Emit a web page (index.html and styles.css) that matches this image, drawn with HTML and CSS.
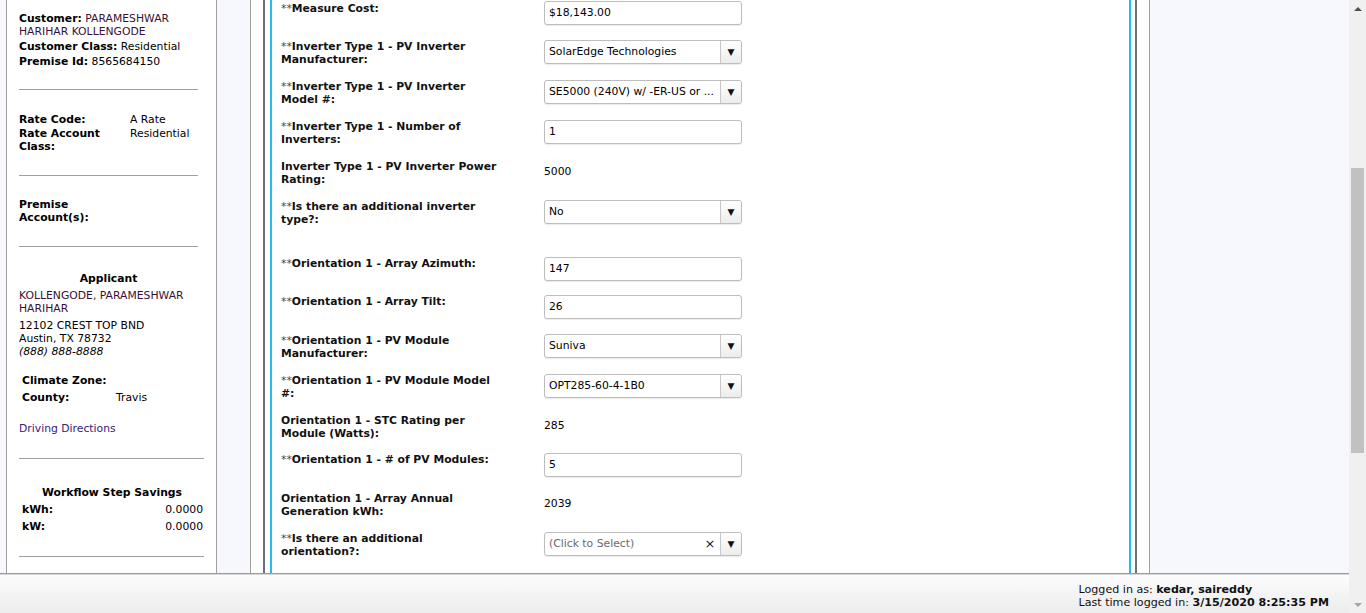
FILE: index.html
```html
<!DOCTYPE html>
<html>
<head>
<meta charset="utf-8">
<title>Measure</title>
<link rel="stylesheet" href="styles.css">
</head>
<body>
<div class="window">
  <div class="main">
    <div class="content">
      <aside class="side">
        <div class="f first"><b>Customer:</b> <span class="name">PARAMESHWAR HARIHAR KOLLENGODE</span></div>
        <div class="f"><b>Customer Class:</b> Residential</div>
        <div class="f"><b>Premise Id:</b> 8565684150</div>
        <hr class="rule r1">
        <div class="kv">
          <b>Rate Code:</b><span>A Rate</span>
          <b>Rate Account Class:</b><span>Residential</span>
        </div>
        <hr class="rule r2">
        <div class="premise"><b>Premise<br>Account(s):</b></div>
        <hr class="rule r3">
        <div class="applicant">Applicant</div>
        <div class="name app-name">KOLLENGODE, PARAMESHWAR HARIHAR</div>
        <div class="addr">12102 CREST TOP BND<br>Austin, TX 78732<br><i>(888) 888-8888</i></div>
        <div class="kv2">
          <b>Climate Zone:</b><span></span>
          <b>County:</b><span>Travis</span>
        </div>
        <a class="dir" href="#">Driving Directions</a>
        <hr class="rule wide r4">
        <div class="savings">Workflow Step Savings</div>
        <div class="sv"><b>kWh:</b><span>0.0000</span></div>
        <div class="sv"><b>kW:</b><span>0.0000</span></div>
        <hr class="rule wide r5">
      </aside>
      <section class="center">
        <div class="frame">
          <div class="accent">
            <div class="form">
              <div class="row h39"><div class="lbl"><span class="st">**</span>Measure Cost:</div><div class="input">$18,143.00</div></div>
              <div class="row"><div class="lbl"><span class="st">**</span>Inverter Type 1 - PV Inverter Manufacturer:</div><div class="select"><span class="sv-text">SolarEdge Technologies</span><span class="arrow">&#9660;</span></div></div>
              <div class="row"><div class="lbl"><span class="st">**</span>Inverter Type 1 - PV Inverter Model #:</div><div class="select"><span class="sv-text">SE5000 (240V) w/ -ER-US or ...</span><span class="arrow">&#9660;</span></div></div>
              <div class="row"><div class="lbl"><span class="st">**</span>Inverter Type 1 - Number of Inverters:</div><div class="input">1</div></div>
              <div class="row"><div class="lbl">Inverter Type 1 - PV Inverter Power Rating:</div><div class="val">5000</div></div>
              <div class="row h57"><div class="lbl"><span class="st">**</span>Is there an additional inverter type?:</div><div class="select"><span class="sv-text">No</span><span class="arrow">&#9660;</span></div></div>
              <div class="row h38"><div class="lbl"><span class="st">**</span>Orientation 1 - Array Azimuth:</div><div class="input">147</div></div>
              <div class="row h39"><div class="lbl"><span class="st">**</span>Orientation 1 - Array Tilt:</div><div class="input">26</div></div>
              <div class="row"><div class="lbl"><span class="st">**</span>Orientation 1 - PV Module Manufacturer:</div><div class="select"><span class="sv-text">Suniva</span><span class="arrow">&#9660;</span></div></div>
              <div class="row"><div class="lbl"><span class="st">**</span>Orientation 1 - PV Module Model #:</div><div class="select"><span class="sv-text">OPT285-60-4-1B0</span><span class="arrow">&#9660;</span></div></div>
              <div class="row h39"><div class="lbl">Orientation 1 - STC Rating per Module (Watts):</div><div class="val">285</div></div>
              <div class="row h39"><div class="lbl"><span class="st">**</span>Orientation 1 - # of PV Modules:</div><div class="input">5</div></div>
              <div class="row"><div class="lbl">Orientation 1 - Array Annual Generation kWh:</div><div class="val">2039</div></div>
              <div class="row"><div class="lbl"><span class="st">**</span>Is there an additional orientation?:</div><div class="select"><span class="sv-text ph">(Click to Select)</span><span class="clear">&#215;</span><span class="arrow">&#9660;</span></div></div>
            </div>
          </div>
        </div>
      </section>
    </div>
    <footer class="footer">
      <div class="login">
        <div>Logged in as: <b>kedar, saireddy</b></div>
        <div>Last time logged in: <b>3/15/2020 8:25:35 PM</b></div>
      </div>
    </footer>
  </div>
  <div class="scrollbar">
    <div class="sb-btn"><span class="tri-up"></span></div>
    <div class="sb-track"><div class="sb-thumb"></div></div>
    <div class="sb-btn"><span class="tri-down"></span></div>
  </div>
</div>
</body>
</html>
```

FILE: styles.css
```css
* { box-sizing: border-box; }
html, body { margin: 0; padding: 0; height: 100%; overflow: hidden; }
body {
  font-family: "DejaVu Sans", Verdana, sans-serif;
  font-size: 10.8px;
  line-height: 13px;
  color: #000;
}
.window { display: flex; height: 613px; width: 1366px; }
.main { flex: 1; display: flex; flex-direction: column; min-width: 0; }
.content {
  height: 573px;
  display: flex;
  background: #f7f8fd;
  overflow: hidden;
}

/* Left panel */
.side {
  margin-left: 6px;
  width: 211px;
  border-left: 1px solid #a0a0a0;
  border-right: 1px solid #a0a0a0;
  background: #fff;
  padding: 0 0 0 12px;
}
.side b { font-weight: bold; }
.f { margin-bottom: 2px; width: 162px; }
.f.first { margin-top: 12px; }
.name { color: #3b1035; }
.rule { border: 0; border-top: 1px solid #a0a0a0; margin: 0; width: 179px; }
.rule.wide { width: 185px; }
.r1 { margin-top: 21px; }
.kv {
  margin-top: 23px;
  display: grid;
  grid-template-columns: 111px 1fr;
  row-gap: 1px;
  width: 185px;
}
.kv b { width: 92px; }
.r2 { margin-top: 22px; }
.premise { margin-top: 22px; }
.r3 { margin-top: 22px; }
.applicant { margin-top: 25px; text-align: center; font-weight: bold; width: 179px; }
.app-name { margin-top: 4px; width: 182px; }
.addr { margin-top: 4px; }
.kv2 {
  margin-top: 16px;
  margin-left: 3px;
  display: grid;
  grid-template-columns: 94px 1fr;
  row-gap: 4px;
  width: 182px;
}
.dir { display: block; margin-top: 18px; color: #33227a; text-decoration: none; }
.r4 { margin-top: 23px; }
.savings { margin-top: 27px; text-align: center; font-weight: bold; width: 186px; }
.sv { display: flex; justify-content: space-between; width: 181px; margin-left: 3px; margin-top: 4px; }
.r5 { margin-top: 23px; }

/* Center */
.center {
  margin-left: 33px;
  width: 900px;
  background: #fff;
  border-left: 1px solid #a0a0a0;
  border-right: 1px solid #a0a0a0;
  padding: 0 12px;
}
.frame {
  height: 100%;
  border-left: 2px solid #707070;
  border-right: 2px solid #707070;
  padding: 0 4px 0 5px;
}
.accent {
  height: 100%;
  border-left: 2px solid #27bde8;
  border-right: 2px solid #27bde8;
  padding: 1px 0 0 9px;
}
.form { display: flex; flex-direction: column; }
.row { display: flex; height: 40px; align-items: flex-start; }
.row.h39 { height: 39px; }
.row.h38 { height: 38px; }
.row.h57 { height: 57px; }
.lbl {
  width: 263px;
  padding-right: 41px;
  font-weight: bold;
  color: #111;
}
.row.h39:first-child .lbl { padding-top: 1px; }
.st { font-weight: normal; color: #444; }
.input, .select {
  width: 198px;
  height: 24px;
  border: 1px solid #bdbdbd;
  border-radius: 3px;
  background: #fff;
  box-shadow: 0 1px 1px rgba(0,0,0,0.08);
  padding: 0 0 0 4px;
  line-height: 22px;
  white-space: nowrap;
}
.select { display: flex; padding: 0; }
.sv-text { flex: 1; padding-left: 4px; overflow: hidden; }
.ph { color: #6a6a6a; }
.clear { width: 20px; text-align: center; font-size: 13px; color: #222; }
.arrow {
  width: 21px;
  border-left: 1px solid #c8c8c8;
  text-align: center;
  font-size: 9px;
  color: #111;
  background: linear-gradient(#fff, #ececec);
  border-radius: 0 3px 3px 0;
}
.val { height: 24px; line-height: 24px; }

/* Footer */
.footer {
  height: 40px;
  border-top: 1px solid #9a9a9a;
  box-shadow: inset 0 1px 0 #d8d8d8;
  background: linear-gradient(#fdfdfd, #ececec);
  display: flex;
  justify-content: flex-end;
  padding: 9px 20px 0 0;
}
.login { font-size: 11.1px; line-height: 13px; color: #111; }

/* Scrollbar */
.scrollbar { width: 17px; background: #f0f0f0; display: flex; flex-direction: column; }
.sb-btn { height: 17px; display: flex; align-items: center; justify-content: center; }
.tri-up { width: 0; height: 0; border-left: 4px solid transparent; border-right: 4px solid transparent; border-bottom: 4px solid #505050; }
.tri-down { width: 0; height: 0; border-left: 4px solid transparent; border-right: 4px solid transparent; border-top: 4px solid #a3a3a3; }
.sb-track { flex: 1; padding: 151px 2px 0 2px; }
.sb-thumb { height: 285px; background: #c1c1c1; }
```
